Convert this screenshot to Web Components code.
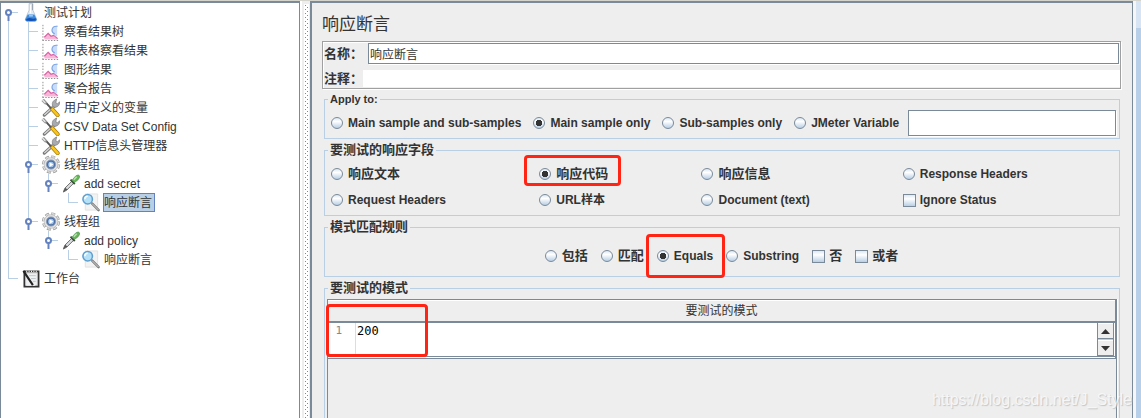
<!DOCTYPE html>
<html lang="zh-CN">
<head>
<meta charset="utf-8">
<title>响应断言</title>
<style>
html, body { margin: 0; height: 100%; }
body { font: 12px/16px "Liberation Sans", "Noto Sans CJK SC", sans-serif; color: #333; background: #eee; overflow: hidden; }
</style>
</head>
<body>
<jm-app>
  <jm-tree slot="tree">
    <tree-node icon="flask" open>测试计划
      <tree-node slot="kids" icon="chart">察看结果树</tree-node>
      <tree-node slot="kids" icon="chart">用表格察看结果</tree-node>
      <tree-node slot="kids" icon="chart">图形结果</tree-node>
      <tree-node slot="kids" icon="chart">聚合报告</tree-node>
      <tree-node slot="kids" icon="tools">用户定义的变量</tree-node>
      <tree-node slot="kids" icon="tools">CSV Data Set Config</tree-node>
      <tree-node slot="kids" icon="tools">HTTP信息头管理器</tree-node>
      <tree-node slot="kids" icon="gear" open>线程组
        <tree-node slot="kids" icon="dropper" open last>add secret
          <tree-node slot="kids" icon="lens" last selected>响应断言</tree-node>
        </tree-node>
      </tree-node>
      <tree-node slot="kids" icon="gear" open last>线程组
        <tree-node slot="kids" icon="dropper" open last>add policy
          <tree-node slot="kids" icon="lens" last>响应断言</tree-node>
        </tree-node>
      </tree-node>
    </tree-node>
    <tree-node icon="bench" last>工作台</tree-node>
  </jm-tree>
  <assertion-panel slot="panel"></assertion-panel>
</jm-app>

<script>
const define = (name, html, setup) => {
  const tpl = document.createElement('template');
  tpl.innerHTML = html;
  customElements.define(name, class extends HTMLElement {
    constructor() {
      super();
      this.attachShadow({ mode: 'open' }).append(tpl.content.cloneNode(true));
    }
    connectedCallback() { if (setup) setup(this, this.shadowRoot); }
  });
};

const icons = {
  flask: `<path d="M8 0.500h4v7l4 9.500q0 2-2 2H6q-2 0-2-2L8 7.500z" fill="#e3ebf2" stroke="#b3bec9" stroke-width=".8"/><path d="M6.500 12h7l2.500 5q0 2.500-2 2.500H6q-2 0-2-2.500z" fill="#3f8ddf"/><path d="M5 17q3-2 5-1t5 0v2.500q-5 1-10 0z" fill="#1450b4"/><path d="M8 13.500h4" stroke="#a5d2f8" stroke-width="1.500"/><path d="M9.500 2v9" stroke="#fff"/><path d="M11.500 1v6.500" stroke="#7d8894" stroke-width=".7"/>`,
  chart: `<path d="M1.500 3v17M1 19.500h17" fill="none" stroke="#8a8a8a" stroke-dasharray="1.500 1.500"/><path d="M3 18.500v-3l4-3.500 3 3 3-1 4 3.500v1z" fill="#f7b6d8"/><path d="M3 16l4-4 3 3 3-1 4 3.500" fill="none" stroke="#d964a6" stroke-width="1.300"/><path d="M16.500 4q-5 0-5.500 4.500 0 3 2 3.500l1 3h2.500z" fill="#c9ddfb"/><path d="M17 4.500q-5.500-.5-6 4 0 3 3 4" fill="none" stroke="#7fa6e6" stroke-width="1.200"/>`,
  tools: `<path d="M3 18L14 8" stroke="#777" stroke-width="3.400" stroke-linecap="round"/><path d="M3 18L14 8" stroke="#d6d6d6" stroke-width="1.400"/><path d="M11.500 8q-1-5 4.500-7l-1 4 2 1 2-2q.5 5-5 6z" fill="#a8acb0" stroke="#777" stroke-width=".7"/><path d="M2 2l9 10" stroke="#555" stroke-width="2"/><path d="M1 2l4 4" stroke="#999" stroke-width="3"/><path d="M1 2l3 3" stroke="#eee" stroke-width="1.200"/><path d="M11.500 12l5.500 6" stroke="#a77600" stroke-width="4.200" stroke-linecap="round"/><path d="M11.500 12l5.500 6" stroke="#f8c61d" stroke-width="2.800" stroke-linecap="round"/>`,
  gear: `<circle cx="10" cy="10" r="8.300" fill="none" stroke="#999" stroke-width="2.600" stroke-dasharray="4.200 2.320"/><circle cx="10" cy="10" r="8.100" fill="none" stroke="#e0e0e0" stroke-width="1.600" stroke-dasharray="3.200 3.162" stroke-dashoffset="-.5"/><circle cx="10" cy="10" r="7.200" fill="#e2e2e2" stroke="#aaa" stroke-width=".6"/><circle cx="10" cy="10" r="4.800" fill="#4c6ea4" stroke="#8799b3"/><circle cx="10" cy="10" r="3" fill="#9dc2ec"/><path d="M8.500 7.500l4 2.500-4 2.500z" fill="#fff"/>`,
  dropper: `<path d="M2 19l1.500-4 7.500-7.500 2 2-7.500 7.500z" fill="#d9dddf" stroke="#666" stroke-width="1"/><path d="M2 18.500l2-4 2.500 2z" fill="#555"/><path d="M9.500 6l4.500 4.500" stroke="#3c4a3c" stroke-width="2"/><path d="M11 6.500l4-4.500q3-2 4 0 .5 2-2 4.500L13.500 9z" fill="#68b45a" stroke="#45924a" stroke-width=".7"/><path d="M13 6l3-3" stroke="#b8e5ab" stroke-width="1.500"/>`,
  lens: `<path d="M4 1h13v17H4z" fill="#f3f3f3" stroke="#e2e2e2"/><path d="M11 11l7 7" stroke="#777" stroke-width="2.600" stroke-linecap="round"/><path d="M11 11l7 7" stroke="#ddd" stroke-width="1"/><circle cx="6.500" cy="6.500" r="5" fill="#b4e0f8" stroke="#5e9fd0" stroke-width="1.600"/><path d="M3.500 6.500q0-3 3-3" stroke="#fff" stroke-width="1.500" fill="none"/>`,
  bench: `<path d="M3 2.500h15v16H3z" fill="#ddd" stroke="#333" stroke-width="1.800"/><path d="M5 5h11v11l-2 1.500H5z" fill="#eef0f2"/><path d="M5 2.500h12" stroke="#fff" stroke-width="1.500" stroke-dasharray="1 1.500"/><path d="M2 2l10 15" stroke="#222" stroke-width="2.200"/><path d="M8 7h7M10 10h5M12 13h3" stroke="#c0c5ca"/>`
};

define('jm-app', `
<style>
:host { display: grid; grid-template-columns: 300px 10px minmax(0, 1fr) 8px; height: 100vh; box-sizing: border-box; border-top: 1px solid #d4d4cc; position: relative; overflow: hidden; }
.side { background: #fff; border: solid #7a8a99; border-width: 2px 1px 0; overflow: hidden; }
.split { background: #eee; border-left: 2px solid #fff; display: flex; justify-content: flex-end; }
.bumps { width: 5px; margin: 3px 1px 0 0;
  background: conic-gradient(from 270deg at 1px 1px, #7a8a99 90deg, transparent 0) 1px 1px / 4px 4px,
              conic-gradient(from 270deg at 1px 1px, #7a8a99 90deg, transparent 0) 3px 3px / 4px 4px, #fff; }
.main { border: solid #7a8a99; border-width: 2px 1px 0 2px; display: flex; min-width: 0; overflow: hidden; }
.edge { border-left: 3px solid #f6f6f6; background: linear-gradient(#d6e4f4 27px, #b8cfe9 27px); }
.mark { position: absolute; right: 9px; bottom: 8px; font-size: 16px; line-height: 20px; color: #f8f8f8; text-shadow: 1px 1px 1px #bbb; opacity: .8; }
</style>
<div class="side"><slot name="tree"></slot></div>
<div class="split"><div class="bumps"></div></div>
<div class="main"><slot name="panel"></slot></div>
<div class="edge"></div>
<div class="mark">https://blog.csdn.net/J_Style</div>`);

define('jm-tree', `
<style>
:host { display: block; margin-left: -1px; }
</style>
<slot></slot>`);

define('tree-node', `
<style>
:host { display: block; position: relative; white-space: nowrap; }
.line { position: absolute; left: 8px; top: 0; bottom: 0; width: 1px; background: #b8cfe5; }
:host([last]) .line { bottom: auto; height: 10px; }
:host([icon=flask]) .line { top: 10px; }
.row { display: grid; grid-template-columns: 8px 10px 3px 20px auto; justify-content: start; align-items: center; height: 19px; position: relative; }
.stub { grid-column: 2; height: 1px; background: #b8cfe5; }
.icon { grid-column: 4; width: 20px; height: 19px; }
.icon svg { display: block; width: 20px; height: 19px; }
.text { grid-column: 5; margin-left: 2px; height: 17px; line-height: 18px; border: 1px solid transparent; padding-right: 2px; }
:host([selected]) .text { background: #b8cfe5; border-color: #6382bf; }
.knob { display: none; position: absolute; left: 5px; top: 6px; }
:host([open]) .knob { display: block; }
.kids { margin-left: 20px; }
</style>
<div class="line"></div>
<div class="row">
  <span class="stub"></span>
  <svg class="knob" width="7" height="12"><path d="M3.500 6v6" stroke="#6382bf" stroke-width="2"/><circle cx="3.500" cy="3.500" r="2.500" fill="#fff" stroke="#6382bf" stroke-width="2"/></svg>
  <span class="icon"></span><span class="text"><slot></slot></span>
</div>
<div class="kids"><slot name="kids"></slot></div>`, (el, root) => {
  root.querySelector('.icon').innerHTML = `<svg viewBox="0 0 20 20" fill="none">${icons[el.getAttribute('icon')]}</svg>`;
});

define('choice-item', `
<style>
:host { display: block; position: relative; font-weight: bold; white-space: nowrap; }
label { display: flex; align-items: center; gap: 5px; height: 26px; }
input { appearance: none; flex: none; margin: 0; width: 12px; height: 12px; border: 1px solid #7a8a99; border-radius: 50%; background: linear-gradient(#dde8f3, #fff 35%, #b8cfe5); }
input[type=checkbox] { width: 13px; height: 13px; border-radius: 0; margin-right: -1px; }
input[type=radio]:checked { background: radial-gradient(circle, #333 0 3px, transparent 3.500px), linear-gradient(#dde8f3, #fff 35%, #b8cfe5); }
</style>
<label><input type="radio"><span><slot></slot></span></label>
<slot name="mark"></slot>`, (el, root) => {
  const input = root.querySelector('input');
  if (el.hasAttribute('check')) input.type = 'checkbox';
  input.checked = el.hasAttribute('checked');
});

define('red-frame', `
<style>
:host { display: block; position: absolute; box-sizing: border-box; border: 3px solid #ff2414; border-radius: 4px; pointer-events: none; z-index: 2; }
</style>`);

define('group-box', `
<style>
:host { display: flex; flex-direction: column; }
fieldset { flex: 1; min-width: 0; min-height: 0; box-sizing: border-box; margin: 0; border: 1px solid #b8cfe5; padding: 3px 7px 2px 6px; }
legend { margin-left: -3px; padding: 0 2px; line-height: 16px; height: 16px; font-weight: bold; font-size: 13px; }
:host([latin]) legend { font-size: 11px; }
:host([roomy]) fieldset { padding-top: 8px; padding-bottom: 7px; }
:host([fill]) fieldset { padding: 3px 2px 0; border-bottom: 0; }
:host([fill]) legend { margin-left: 1px; }
</style>
<fieldset><legend><slot name="title"></slot></legend><slot></slot></fieldset>`);

define('pattern-table', `
<style>
:host { display: block; height: 100%; box-sizing: border-box; border: 1px solid #7a8a99; border-bottom: 0; box-shadow: 1px 0 #fff; position: relative; }
table { width: 100%; border-collapse: collapse; }
th { height: 20px; padding: 0; font-weight: normal; border-top: 1px solid #fff; border-bottom: 2px solid #7a8a99; border-right: 1px solid #7a8a99; }
td { padding: 0; border-bottom: 1px solid #7a8a99; border-right: 1px solid #7a8a99; }
.cell { display: flex; height: 33px; background: #fff; border-bottom: 1px solid #7a8a99; margin-bottom: 1px; font: 12px/16px "DejaVu Sans Mono", monospace; box-shadow: 0 1px #fff; }
.num { width: 28px; box-sizing: border-box; text-align: right; padding-right: 13px; border-right: 1px solid #ddd; color: #888; font-size: 11px; }
textarea { flex: 1; min-width: 0; border: 0; margin: 0; padding: 0 0 0 1px; font: inherit; color: #000; resize: none; outline: 0; background: none; overflow: hidden; }
.bar { width: 17px; box-sizing: border-box; border: solid #7a8a99; border-width: 0 1px; display: flex; flex-direction: column; margin-right: 1px; gap: 1px; background: #b8cfe5; }
button { flex: 1; padding: 0; border: 0; border-bottom: 1px solid #7a8a99; border-top: 1px solid #fff; background: #eee; display: flex; align-items: center; justify-content: center; }
button svg { display: block; }
red-frame { left: -2px; top: 4px; width: 102px; height: 53px; }
</style>
<table>
  <thead><tr><th>要测试的模式</th></tr></thead>
  <tbody><tr><td><div class="cell"><span class="num">1</span><textarea aria-label="要测试的模式">200</textarea>
    <div class="bar"><button aria-label="上"><svg width="9" height="5"><path d="M0 5L4.500 0 9 5z" fill="#333"/></svg></button><button aria-label="下"><svg width="9" height="5"><path d="M0 0L4.500 5 9 0z" fill="#333"/></svg></button></div>
  </div></td></tr></tbody>
</table>
<red-frame></red-frame>`);

define('assertion-panel', `
<style>
:host { flex: 1; min-width: 0; display: flex; flex-direction: column; padding: 0 12px; }
h1 { margin: 0; padding-top: 9px; height: 29px; font-size: 17px; font-weight: normal; line-height: 26px; margin-left: -2px; }
.names { margin: 0 -1px 0 -2px; border: 1px solid #a0a0a0; box-shadow: 1px 1px #fff, inset 1px 1px #fff; padding: 1px 0 1px 1px; display: grid; gap: 6px; }
.names div { display: flex; align-items: center; }
.names label { font-size: 13px; font-weight: bold; width: 39px; line-height: 17px; white-space: nowrap; }
input { box-sizing: border-box; flex: 1; min-width: 0; margin: 0; padding: 0 1px; border: 0; font: inherit; color: inherit; background: #fff; outline: 0; height: 17px; }
input.boxed { height: 21px; border: 1px solid #7a8a99; box-shadow: 1px 1px #fff; }
.names .boxed { margin: 0 1px 0 5px; }
group-box { margin-top: 3px; }
.names + group-box { margin-top: 2px; }
.row { display: flex; gap: 12px; align-items: center; }
.row .boxed { height: 26px; margin: 0 -4px 0 -3px; }
.center { justify-content: center; gap: 13px; }
.grid { display: grid; grid-template-columns: 208fr 162fr 201fr 209fr; }
.cjk { font-size: 13px; }
.code red-frame { left: -15px; top: -6px; width: 97px; height: 31px; }
.equals red-frame { left: -11px; top: -9px; width: 79px; height: 44px; }
[fill] { flex: 1; min-height: 0; }
</style>
<h1>响应断言</h1>
<div class="names">
  <div><label for="name">名称：</label><input id="name" class="boxed" value="响应断言"></div>
  <div><label for="note">注释：</label><input id="note"></div>
</div>
<group-box latin><span slot="title">Apply to:</span>
  <div class="row">
    <choice-item>Main sample and sub-samples</choice-item>
    <choice-item checked>Main sample only</choice-item>
    <choice-item>Sub-samples only</choice-item>
    <choice-item>JMeter Variable</choice-item>
    <input class="boxed" aria-label="JMeter Variable">
  </div>
</group-box>
<group-box><span slot="title">要测试的响应字段</span>
  <div class="grid">
    <choice-item class="cjk">响应文本</choice-item>
    <choice-item class="cjk code" checked>响应代码<red-frame slot="mark"></red-frame></choice-item>
    <choice-item class="cjk">响应信息</choice-item>
    <choice-item>Response Headers</choice-item>
    <choice-item>Request Headers</choice-item>
    <choice-item>URL样本</choice-item>
    <choice-item>Document (text)</choice-item>
    <choice-item check>Ignore Status</choice-item>
  </div>
</group-box>
<group-box roomy><span slot="title">模式匹配规则</span>
  <div class="row center">
    <choice-item class="cjk">包括</choice-item>
    <choice-item class="cjk">匹配</choice-item>
    <choice-item class="equals" checked>Equals<red-frame slot="mark"></red-frame></choice-item>
    <choice-item>Substring</choice-item>
    <choice-item class="cjk" check>否</choice-item>
    <choice-item class="cjk" check>或者</choice-item>
  </div>
</group-box>
<group-box fill><span slot="title">要测试的模式</span>
  <pattern-table></pattern-table>
</group-box>`);
</script>
</body>
</html>
